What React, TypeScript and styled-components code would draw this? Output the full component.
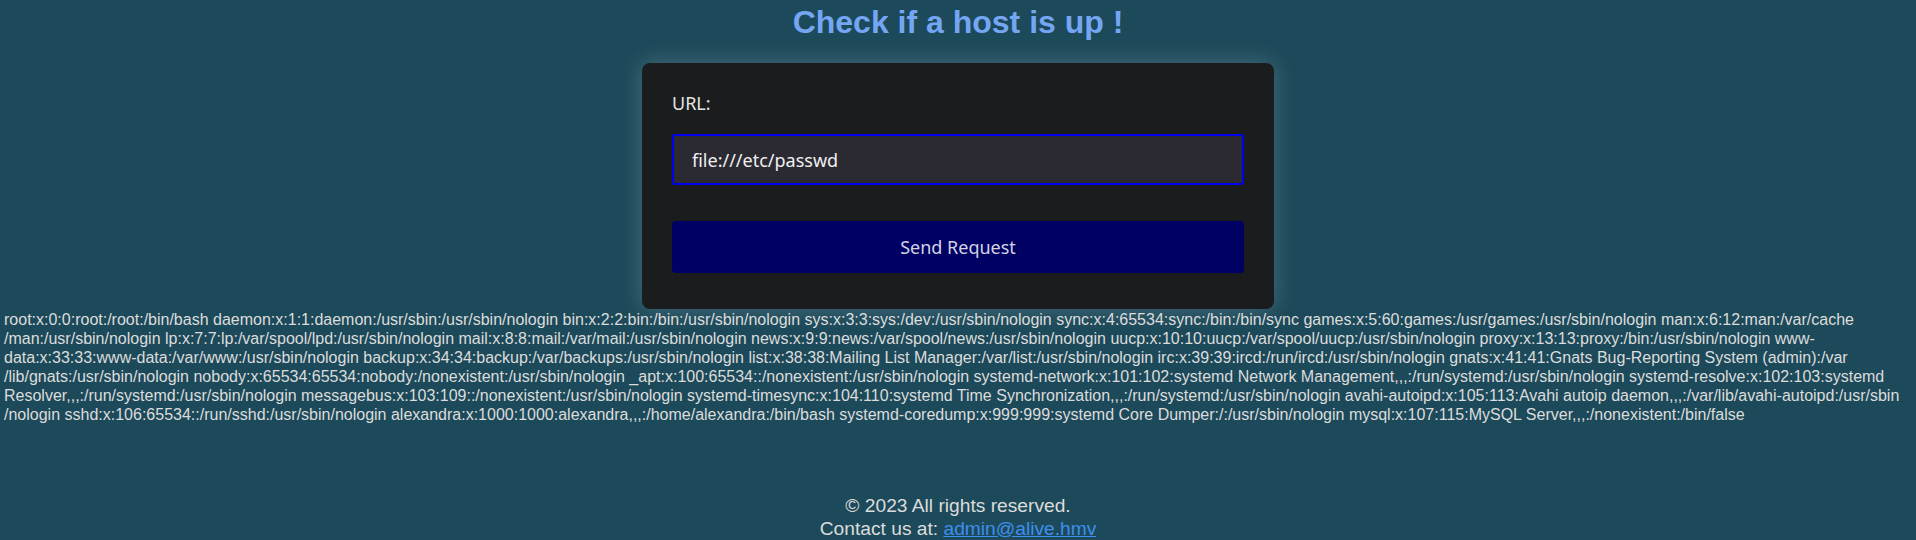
import React from 'react';
import styled, { createGlobalStyle } from 'styled-components';

const GlobalStyle = createGlobalStyle`
  html, body {
    margin: 0;
    padding: 0;
    background: #1d4a5a;
  }
  body {
    font-family: "Liberation Sans", Arial, sans-serif;
    color: #dcdcdc;
  }
`;

const Page = styled.div`
  display: flex;
  flex-direction: column;
  align-items: center;
  min-height: 540px;
`;

const Title = styled.h1`
  margin: 0;
  padding: 4px 0 0;
  font-family: "Liberation Sans Narrow", "Liberation Sans", sans-serif;
  font-size: 32px;
  font-weight: bold;
  color: #74a6f4;
`;

const Card = styled.form`
  box-sizing: border-box;
  width: 632px;
  margin-top: 22px;
  padding: 28px 30px 36px;
  background: #1b1c1e;
  border-radius: 8px;
  box-shadow: 0 0 22px rgba(200, 220, 230, 0.25);
  display: flex;
  flex-direction: column;
  font-family: "Noto Sans", "Open Sans", sans-serif;
`;

const Label = styled.label`
  font-size: 18px;
  color: #e4e4e4;
  line-height: 24px;
`;

const Input = styled.input`
  box-sizing: border-box;
  margin-top: 19px;
  height: 51px;
  padding: 0 18px;
  border: 2px solid #0000f0;
  border-radius: 3px;
  background: #2b2a33;
  color: #f0f0f0;
  font-family: inherit;
  font-size: 18px;
  outline: none;
`;

const Button = styled.button`
  margin-top: 36px;
  height: 52px;
  border: none;
  border-radius: 4px;
  background: #000064;
  color: #d4d4e0;
  font-family: inherit;
  font-size: 18px;
`;

const Output = styled.div`
  align-self: stretch;
  box-sizing: border-box;
  width: 1906px;
  padding: 1px 0 0 4px;
  font-size: 16px;
  line-height: 19px;
  color: #dcdcdc;
`;

const Entry = styled.span``;

const Footer = styled.footer`
  margin-top: auto;
  text-align: center;
  font-size: 19.2px;
  line-height: 23px;
  color: #dcdcdc;
`;

const Link = styled.a`
  color: #3d8fee;
  text-decoration: underline;
`;

// "|" marks the spots where the reference browser broke a long path
const passwd =
  'root:x:0:0:root:/root:/bin/bash daemon:x:1:1:daemon:/usr/sbin:/usr/sbin/nologin bin:x:2:2:bin:/bin:/usr/sbin/nologin sys:x:3:3:sys:/dev:/usr/sbin/nologin sync:x:4:65534:sync:/bin:/bin/sync games:x:5:60:games:/usr/games:/usr/sbin/nologin man:x:6:12:man:/var/cache|/man:/usr/sbin/nologin lp:x:7:7:lp:/var/spool/lpd:/usr/sbin/nologin mail:x:8:8:mail:/var/mail:/usr/sbin/nologin news:x:9:9:news:/var/spool/news:/usr/sbin/nologin uucp:x:10:10:uucp:/var/spool/uucp:/usr/sbin/nologin proxy:x:13:13:proxy:/bin:/usr/sbin/nologin www-data:x:33:33:www-data:/var/www:/usr/sbin/nologin backup:x:34:34:backup:/var/backups:/usr/sbin/nologin list:x:38:38:Mailing List Manager:/var/list:/usr/sbin/nologin irc:x:39:39:ircd:/run/ircd:/usr/sbin/nologin gnats:x:41:41:Gnats Bug-Reporting System (admin):/var|/lib/gnats:/usr/sbin/nologin nobody:x:65534:65534:nobody:/nonexistent:/usr/sbin/nologin _apt:x:100:65534::/nonexistent:/usr/sbin/nologin systemd-network:x:101:102:systemd Network Management,,,:/run/systemd:/usr/sbin/nologin systemd-resolve:x:102:103:systemd Resolver,,,:/run/systemd:/usr/sbin/nologin messagebus:x:103:109::/nonexistent:/usr/sbin/nologin systemd-timesync:x:104:110:systemd Time Synchronization,,,:/run/systemd:/usr/sbin/nologin avahi-autoipd:x:105:113:Avahi autoip daemon,,,:/var/lib/avahi-autoipd:/usr/sbin|/nologin sshd:x:106:65534::/run/sshd:/usr/sbin/nologin alexandra:x:1000:1000:alexandra,,,:/home/alexandra:/bin/bash systemd-coredump:x:999:999:systemd Core Dumper:/:/usr/sbin/nologin mysql:x:107:115:MySQL Server,,,:/nonexistent:/bin/false';

// one span per whitespace-separated entry, <wbr> where the path was broken
function renderPasswd(text: string) {
  const words = text.split(' ');
  return words.map((w, i) => (
    <React.Fragment key={i}>
      <Entry>
        {w.split('|').map((p, j) => (
          <React.Fragment key={j}>
            {j > 0 && <wbr />}
            {p}
          </React.Fragment>
        ))}
      </Entry>
      {i < words.length - 1 ? ' ' : null}
    </React.Fragment>
  ));
}

export default function App() {
  return (
    <>
      <GlobalStyle />
      <Page>
        <Title>Check if a host is up !</Title>
        <Card onSubmit={e => e.preventDefault()}>
          <Label htmlFor="url">URL:</Label>
          <Input id="url" type="text" defaultValue="file:///etc/passwd" />
          <Button type="submit">Send Request</Button>
        </Card>
        <Output>{renderPasswd(passwd)}</Output>
        <Footer>
          <div>© 2023 All rights reserved.</div>
          <div>
            Contact us at: <Link href="mailto:admin@alive.hmv">admin@alive.hmv</Link>
          </div>
        </Footer>
      </Page>
    </>
  );
}
